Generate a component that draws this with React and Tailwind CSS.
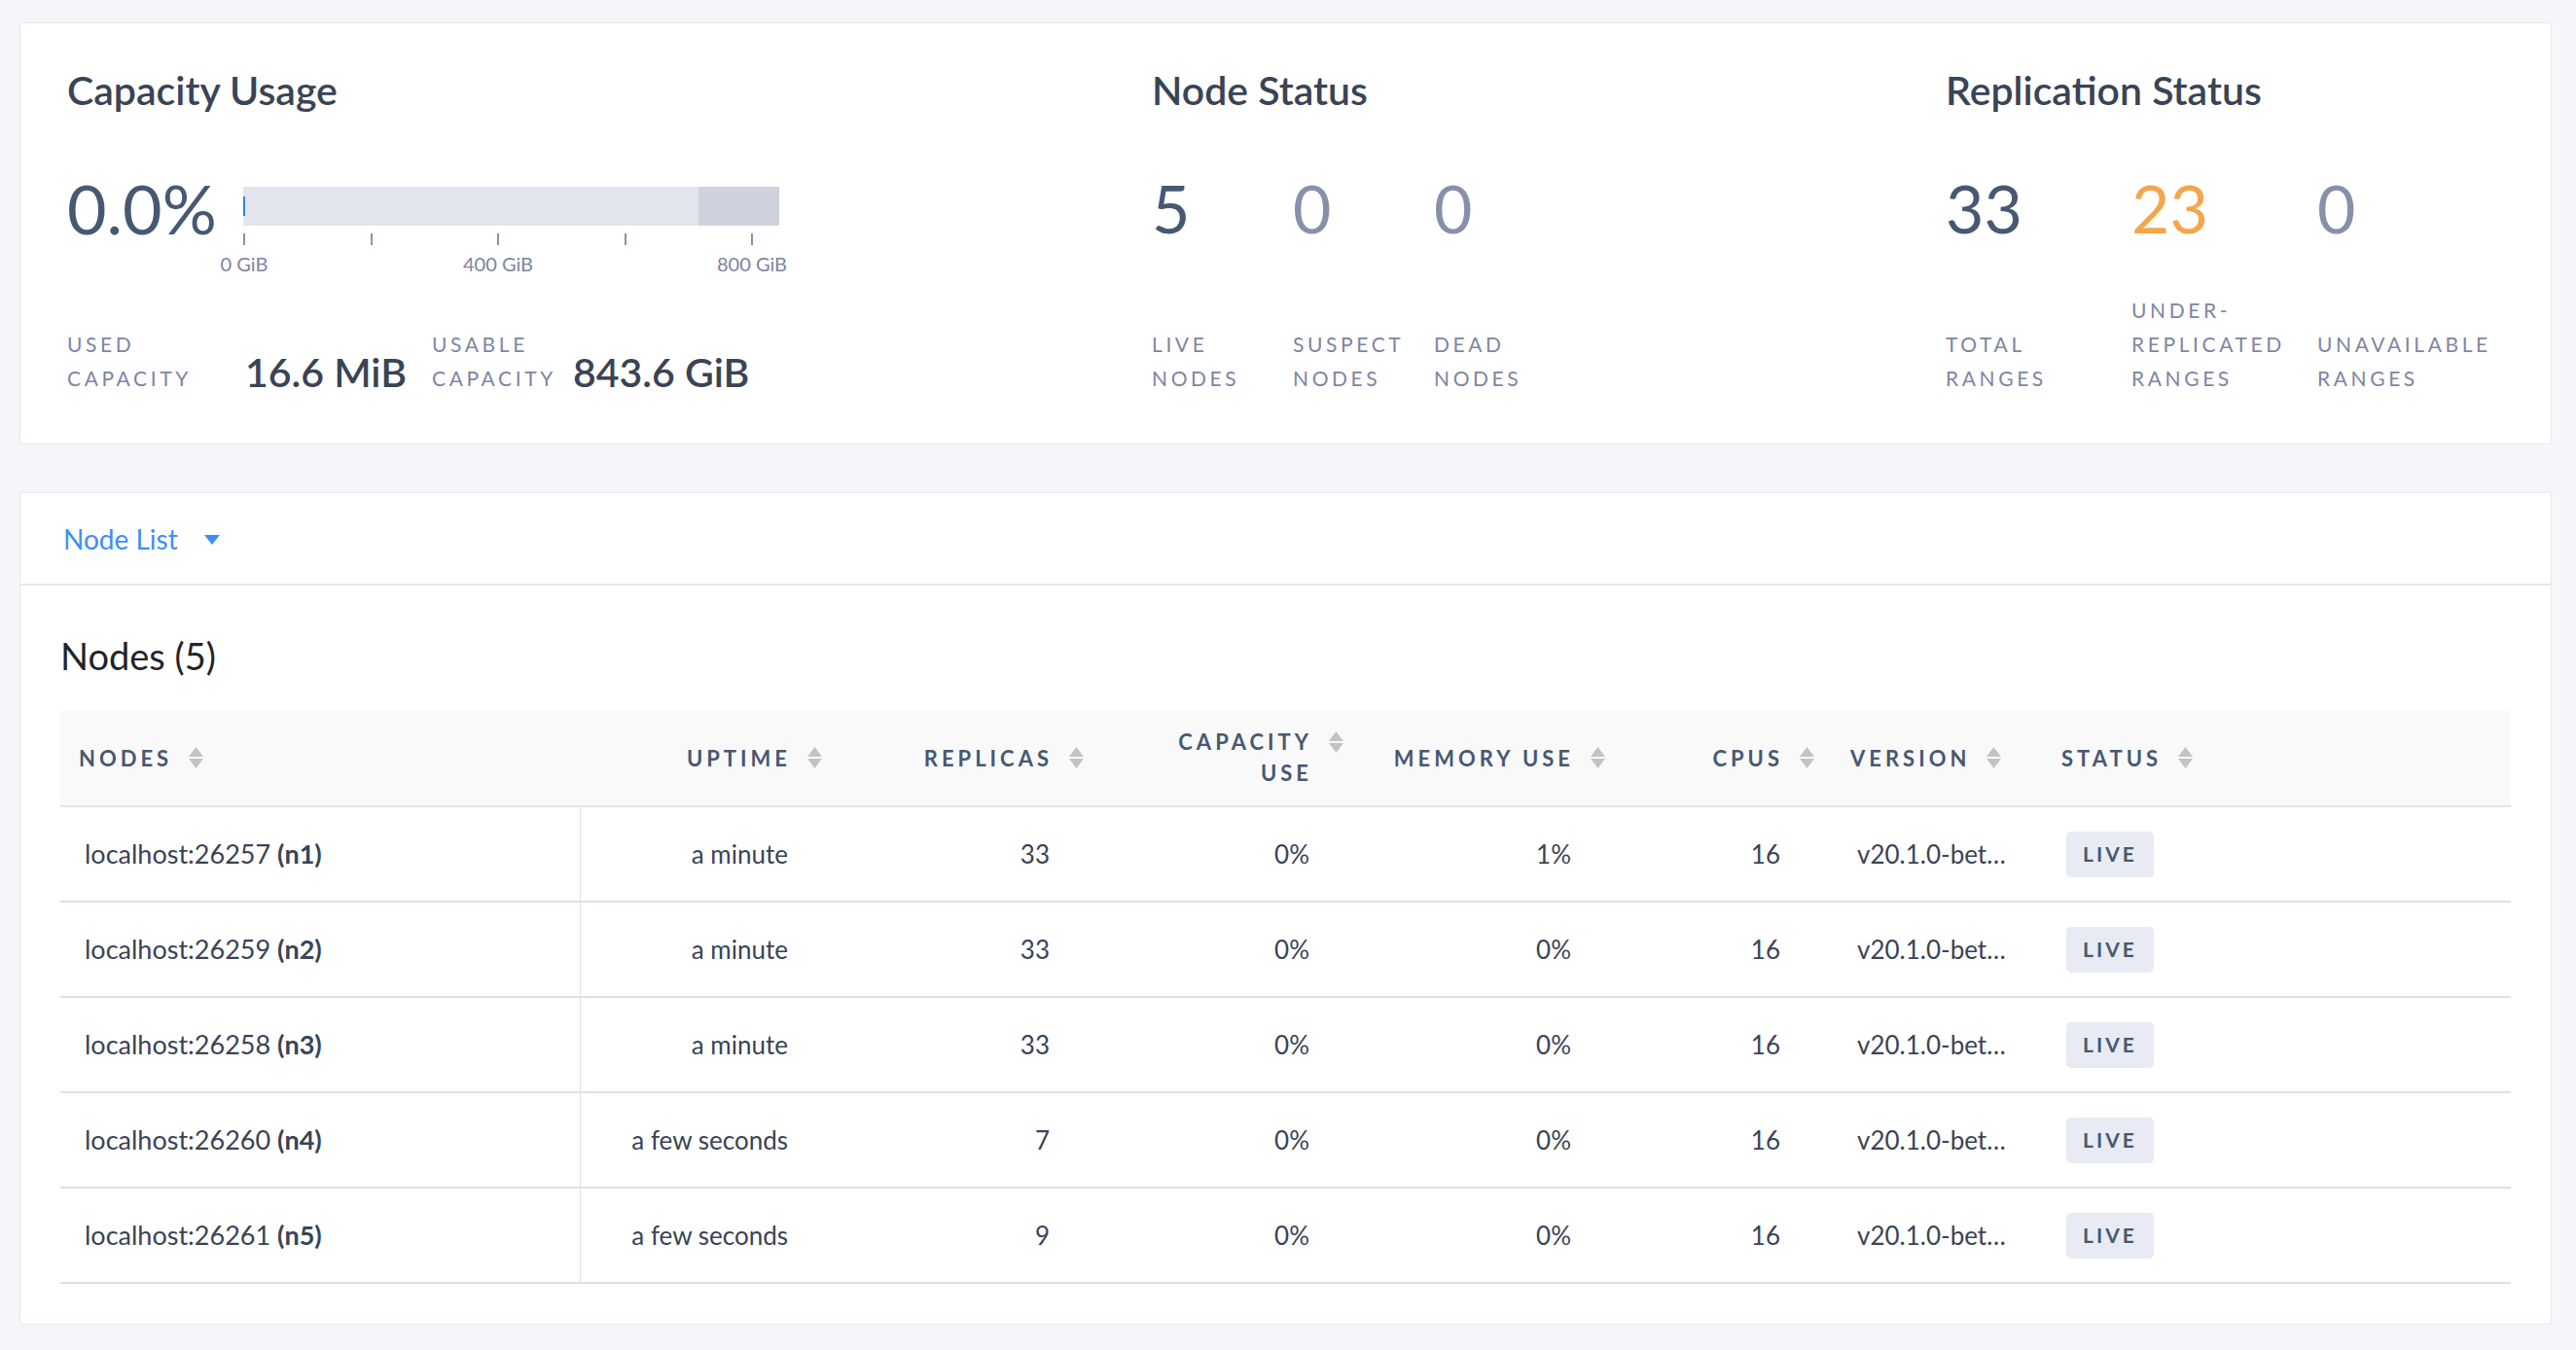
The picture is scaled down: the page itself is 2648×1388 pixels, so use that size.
import React from "react";

const nodes = [
  { addr: "localhost:26257", id: "n1", uptime: "a minute", replicas: 33, cap: "0%", mem: "1%", cpus: 16 },
  { addr: "localhost:26259", id: "n2", uptime: "a minute", replicas: 33, cap: "0%", mem: "0%", cpus: 16 },
  { addr: "localhost:26258", id: "n3", uptime: "a minute", replicas: 33, cap: "0%", mem: "0%", cpus: 16 },
  { addr: "localhost:26260", id: "n4", uptime: "a few seconds", replicas: 7, cap: "0%", mem: "0%", cpus: 16 },
  { addr: "localhost:26261", id: "n5", uptime: "a few seconds", replicas: 9, cap: "0%", mem: "0%", cpus: 16 },
];

const gridCols = "grid grid-cols-[535px_269px_269px_267px_269px_215px_217px_1fr]";

function SortArrows({ className = "" }) {
  return (
    <svg width="17" height="24" viewBox="0 0 17 24" className={className}>
      <path d="M8.5 1 L16 11 H1 Z" fill="#c3c3c3" />
      <path d="M1 13 H16 L8.5 23 Z" fill="#c3c3c3" />
    </svg>
  );
}

function StatLabel({ lines }) {
  return (
    <div className="text-[21px] leading-[35px] tracking-[3.6px] text-[#7d86a3]">
      {lines.map((l) => (
        <div key={l}>{l}</div>
      ))}
    </div>
  );
}

function Stat({ value, color, lines, width }) {
  return (
    <div className={`flex flex-col ${width}`}>
      <div className={`h-[120px] text-[68px] leading-[66px] ${color}`}>{value}</div>
      <div className="h-[105px] flex flex-col justify-end">
        <StatLabel lines={lines} />
      </div>
    </div>
  );
}

function CapacityBar() {
  return (
    <div className="w-[551px] pt-[11px]">
      <div className="flex h-[40px]">
        <div className="flex-1 flex items-center bg-[#e2e5ee]">
          <div className="w-[2px] h-[20px] bg-[#3a7de1]" />
        </div>
        <div className="w-[83px] bg-[#cfd2dc]" />
      </div>
      <div className="flex justify-between w-[524px] mt-[8px] h-[12px]">
        {[0, 1, 2, 3, 4].map((i) => (
          <div key={i} className="w-[2px] h-full bg-[#8a92aa]" />
        ))}
      </div>
      <div className="flex justify-between w-[524px] mt-[9px] text-[20px] leading-[20px] text-[#7b85a2]">
        {["0 GiB", "400 GiB", "800 GiB"].map((t) => (
          <div key={t} className="w-[2px] flex justify-center whitespace-nowrap">
            {t}
          </div>
        ))}
      </div>
    </div>
  );
}

function HeaderCell({ label, align }) {
  if (align === "left") {
    return (
      <div className="flex items-center pl-[19px]">
        <span>{label}</span>
        <SortArrows className="ml-[16px]" />
      </div>
    );
  }
  if (align === "start") {
    return (
      <div className="flex items-center pl-[16px]">
        <span>{label}</span>
        <SortArrows className="ml-[16px]" />
      </div>
    );
  }
  return (
    <div className="flex items-center justify-end pr-[20px]">
      <span>{label}</span>
      <SortArrows className="ml-[16px]" />
    </div>
  );
}

export default function App() {
  return (
    <div className="min-h-screen bg-[#f5f6fa] pt-[23px] pl-[20px] pr-[25px] pb-[25px] font-['Lato',sans-serif]">
      {/* Summary card */}
      <section className="flex bg-white border border-[#e6e9ef] rounded-[2px] pt-[45px] pb-[50px] pl-[48px]">
        <div className="w-[1115px] flex flex-col">
          <h2 className="text-[41px] leading-[48px] font-semibold text-[#394455]">Capacity Usage</h2>
          <div className="mt-[64px] h-[120px] flex items-start">
            <div className="w-[181px] text-[70px] leading-[66px] text-[#475872]">0.0%</div>
            <CapacityBar />
          </div>
          <div className="h-[105px] flex items-end">
            <div className="w-[183px]">
              <StatLabel lines={["USED", "CAPACITY"]} />
            </div>
            <div className="w-[192px] text-[41px] leading-[46px] font-semibold text-[#394455]">16.6 MiB</div>
            <div className="w-[145px]">
              <StatLabel lines={["USABLE", "CAPACITY"]} />
            </div>
            <div className="text-[41px] leading-[46px] font-semibold text-[#394455]">843.6 GiB</div>
          </div>
        </div>

        <div className="w-[816px] flex flex-col">
          <h2 className="text-[41px] leading-[48px] font-semibold text-[#394455]">Node Status</h2>
          <div className="mt-[64px] flex">
            <Stat value="5" color="text-[#475872]" lines={["LIVE", "NODES"]} width="w-[145px]" />
            <Stat value="0" color="text-[#8790ab]" lines={["SUSPECT", "NODES"]} width="w-[145px]" />
            <Stat value="0" color="text-[#8790ab]" lines={["DEAD", "NODES"]} width="w-[145px]" />
          </div>
        </div>

        <div className="flex-1 flex flex-col">
          <h2 className="text-[41px] leading-[48px] font-semibold text-[#394455]">Replication Status</h2>
          <div className="mt-[64px] flex">
            <Stat value="33" color="text-[#475872]" lines={["TOTAL", "RANGES"]} width="w-[191px]" />
            <Stat value="23" color="text-[#f5a54a]" lines={["UNDER-", "REPLICATED", "RANGES"]} width="w-[191px]" />
            <Stat value="0" color="text-[#8790ab]" lines={["UNAVAILABLE", "RANGES"]} width="w-[191px]" />
          </div>
        </div>
      </section>

      {/* Node list card */}
      <section className="mt-[49px] bg-white border border-[#e6e9ef] rounded-[3px]">
        <div className="h-[95px] flex items-center pl-[44px] border-b-2 border-[#e6e7ea]">
          <span className="text-[28px] text-[#3d8ef7]">Node List</span>
          <svg width="16" height="10" viewBox="0 0 16 10" className="ml-[27px] mt-[2px]">
            <path d="M0 0 H16 L8 10 Z" fill="#3d8ef7" />
          </svg>
        </div>

        <div className="pt-[49px] px-[41px] pb-[41px]">
          <h3 className="text-[38px] leading-[46px] text-[#222428]">Nodes (5)</h3>

          <div className="mt-[33px]">
            <div
              className={`${gridCols} h-[100px] bg-[#f9f9fa] rounded-t-[3px] border-b-2 border-[#e4e5e8] text-[22px] font-bold tracking-[4px] text-[#475872]`}
            >
              <HeaderCell label="NODES" align="left" />
              <HeaderCell label="UPTIME" />
              <HeaderCell label="REPLICAS" />
              <div className="flex items-center justify-end pr-[20px]">
                <div className="flex items-start">
                  <div className="text-right leading-[32px]">
                    <div>CAPACITY</div>
                    <div>USE</div>
                  </div>
                  <SortArrows className="ml-[16px] mt-[4px]" />
                </div>
              </div>
              <HeaderCell label="MEMORY USE" />
              <HeaderCell label="CPUS" />
              <HeaderCell label="VERSION" align="start" />
              <HeaderCell label="STATUS" align="start" />
            </div>

            {nodes.map((n) => (
              <div
                key={n.id}
                className={`${gridCols} h-[98px] border-b-2 border-[#dde0e8] text-[26px] text-[#394455]`}
              >
                <div className="flex items-center pl-[25px] border-r border-[#dde0e8] text-[27px]">
                  {n.addr}&nbsp;<span className="font-bold">({n.id})</span>
                </div>
                <div className="flex items-center justify-end pr-[56px]">{n.uptime}</div>
                <div className="flex items-center justify-end pr-[56px]">{n.replicas}</div>
                <div className="flex items-center justify-end pr-[56px]">{n.cap}</div>
                <div className="flex items-center justify-end pr-[56px]">{n.mem}</div>
                <div className="flex items-center justify-end pr-[56px]">{n.cpus}</div>
                <div className="flex items-center pl-[23px] whitespace-nowrap">v20.1.0-bet…</div>
                <div className="flex items-center pl-[21px]">
                  <span className="h-[47px] flex items-center px-[17px] rounded-[5px] bg-[#e8ebf3] text-[21px] font-bold tracking-[3px] text-[#475872]">
                    LIVE
                  </span>
                </div>
              </div>
            ))}
          </div>
        </div>
      </section>
    </div>
  );
}
